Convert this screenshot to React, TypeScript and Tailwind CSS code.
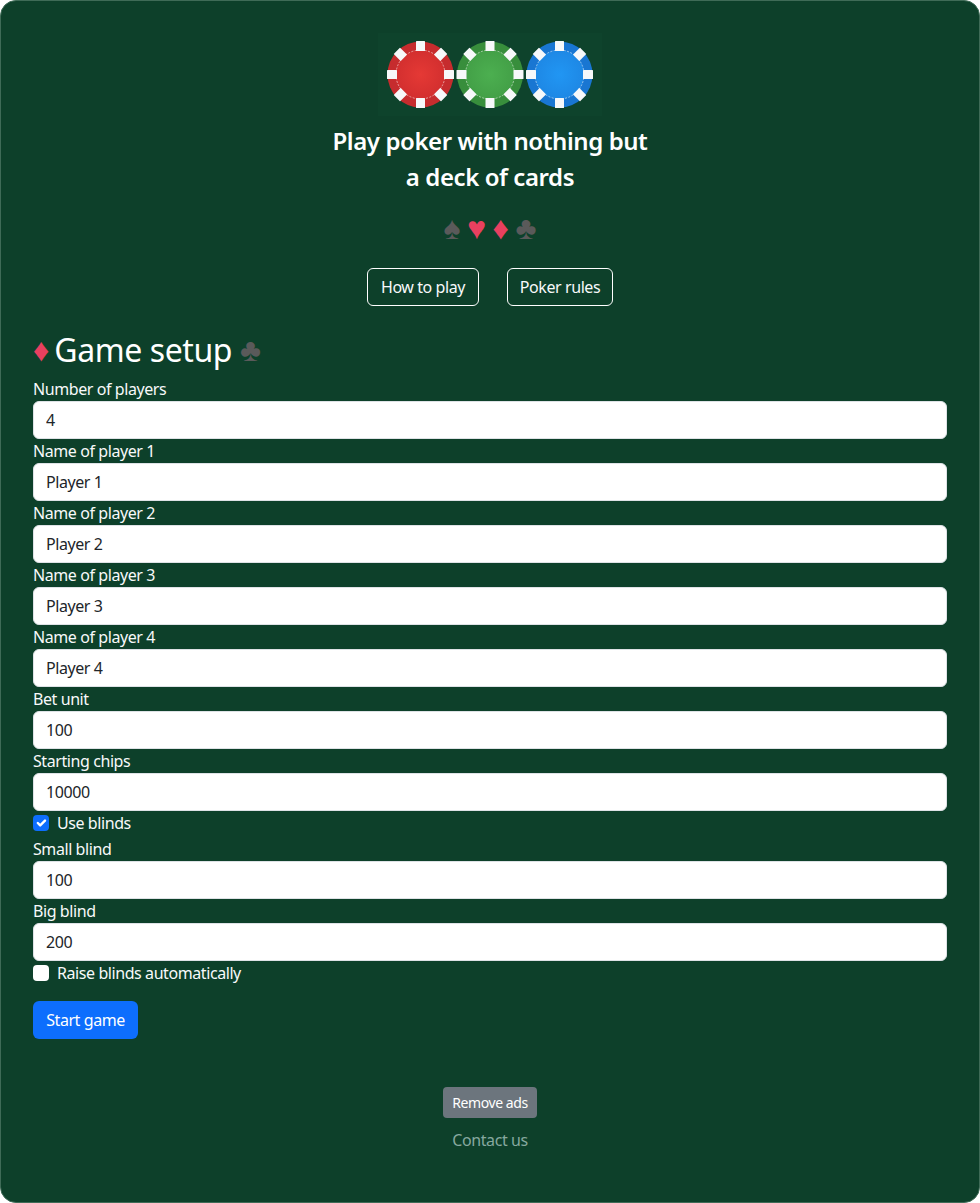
import React from 'react';

const fontStack = "font-['Noto_Sans','Liberation_Sans',sans-serif] tracking-[-0.42px]";

const Chip = ({ cx, rim, inner, glow }: { cx: number; rim: string; inner: string; glow: string }) => {
  const angles = [0, 45, 90, 135, 180, 225, 270, 315];
  return (
    <g transform={`translate(${cx} 41.5)`}>
      <defs>
        <radialGradient id={`chip-${cx}`}>
          <stop offset="0%" stopColor={glow} />
          <stop offset="100%" stopColor={inner} />
        </radialGradient>
      </defs>
      <circle r="33" fill={rim} />
      <circle r="24.5" fill={`url(#chip-${cx})`} />
      <circle r="24.5" fill="none" stroke="#fff" strokeOpacity="0.75" strokeWidth="0.7" strokeDasharray="2 1.4" />
      {angles.map((a) => (
        <rect key={a} x="-4.5" y="-33.5" width="9" height="10" rx="0.5" fill="#f7f8fa" transform={`rotate(${a})`} />
      ))}
    </g>
  );
};

const Field = ({ label, value }: { label: string; value: string }) => (
  <div>
    <label className="block text-[16px] leading-6 text-[#f8f9fa]">{label}</label>
    <input
      readOnly
      value={value}
      className="block w-full h-[38px] px-3 bg-white border border-[#dee2e6] rounded-[6px] text-[16px] text-[#212529] tracking-[-0.42px] outline-none"
    />
  </div>
);

const Check = ({ label, checked }: { label: string; checked?: boolean }) => (
  <div className="flex items-center h-6 mb-[2px] gap-2">
    <span className={`flex items-center justify-center w-4 h-4 rounded-[4px] ${checked ? 'bg-[#0d6efd]' : 'bg-white'}`}>
      {checked && (
        <svg className="w-4 h-4" viewBox="0 0 20 20" fill="none">
          <path d="M6 10l3 3 6-6" stroke="#fff" strokeWidth="3" strokeLinecap="round" strokeLinejoin="round" />
        </svg>
      )}
    </span>
    <span className="text-[16px] leading-6 text-[#f8f9fa]">{label}</span>
  </div>
);

const players = ['Player 1', 'Player 2', 'Player 3', 'Player 4'];

export default function App() {
  return (
    <div className={`${fontStack} min-h-[1203px] bg-[#0d402a] border border-[#3f6b57] rounded-[16px] p-8 text-white`}>
      <div className="flex flex-col items-center">
        <svg className="block w-[224px] h-[83px] mb-[7px] bg-[#0e432c]" viewBox="0 0 224 83">
          <Chip cx={42.5} rim="#c62c2e" inner="#d32f2f" glow="#e53935" />
          <Chip cx={112} rim="#388e3c" inner="#43a047" glow="#4caf50" />
          <Chip cx={181.5} rim="#1976d2" inner="#1e88e5" glow="#2196f3" />
        </svg>
        <h1 className="text-[24px] leading-9 font-semibold text-center text-white">
          Play poker with nothing but
          <br />a deck of cards
        </h1>
        <div className="flex items-center justify-center gap-[6.5px] mt-[10px] h-[45px] text-[32px] leading-9 tracking-normal font-['Liberation_Sans',sans-serif]">
          <span className="text-[#5a5a5a]">♠</span>
          <span className="text-[#e8405f]">♥</span>
          <span className="text-[#e8405f]">♦</span>
          <span className="text-[#5a5a5a]">♣</span>
        </div>
        <div className="flex justify-center gap-7 mt-[18px]">
          <button className="h-[38px] w-[112px] border border-white rounded-[6px] text-[16px] text-[#f8f9fa]">How to play</button>
          <button className="h-[38px] w-[106px] border border-white rounded-[6px] text-[16px] text-[#f8f9fa]">Poker rules</button>
        </div>
      </div>

      <h2 className="flex items-center h-[38px] mt-[25px] mb-2 text-[32px] leading-[38px] font-normal text-white">
        <span className="text-[#e8405f] font-['Liberation_Sans',sans-serif] tracking-normal mr-[5px]">♦</span>
        Game setup
        <span className="text-[#5a5a5a] font-['Liberation_Sans',sans-serif] tracking-normal ml-[8px]">♣</span>
      </h2>

      <Field label="Number of players" value="4" />
      {players.map((p, i) => (
        <Field key={p} label={`Name of player ${i + 1}`} value={p} />
      ))}
      <Field label="Bet unit" value="100" />
      <Field label="Starting chips" value="10000" />
      <Check label="Use blinds" checked />
      <Field label="Small blind" value="100" />
      <Field label="Big blind" value="200" />
      <Check label="Raise blinds automatically" />

      <button className="block h-[38px] w-[105px] mt-4 bg-[#0d6efd] rounded-[6px] text-[16px] text-white">Start game</button>

      <div className="flex flex-col items-center mt-12">
        <button className="h-[31px] w-[94px] bg-[#6c757d] rounded-[4px] text-[14px] text-white">Remove ads</button>
        <a className="mt-[10px] text-[16px] leading-6 text-[#86a89f]">Contact us</a>
      </div>
    </div>
  );
}
